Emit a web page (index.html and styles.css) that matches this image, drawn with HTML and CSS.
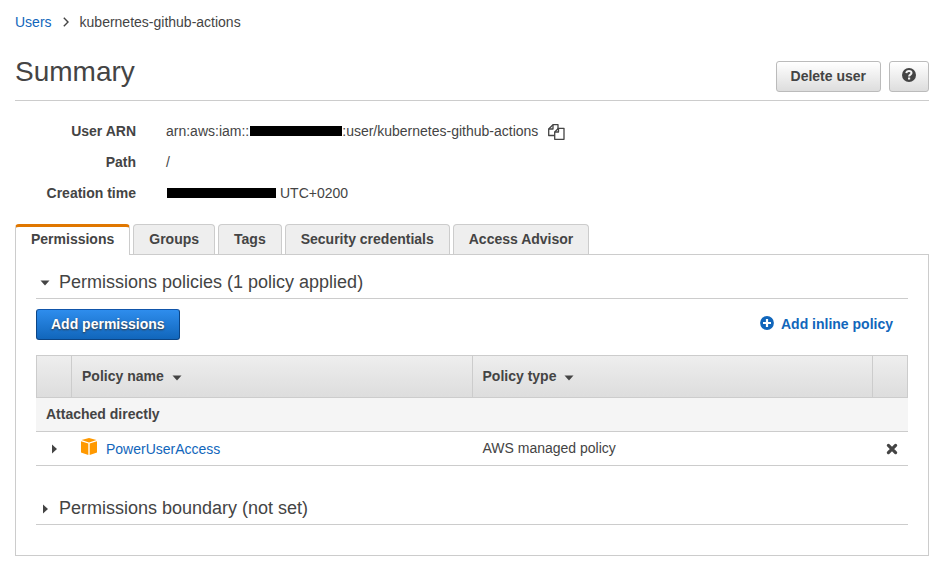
FILE: index.html
```html
<!DOCTYPE html>
<html lang="en">
<head>
<meta charset="utf-8">
<meta name="viewport" content="width=device-width, initial-scale=1">
<title>kubernetes-github-actions</title>
<link rel="stylesheet" href="styles.css">
</head>
<body>
<nav class="breadcrumb" aria-label="Breadcrumb">
  <a href="#users">Users</a>
  <svg width="6" height="10" viewBox="0 0 6 10" aria-hidden="true"><path d="M.8.800l4.200 4.200-4.200 4.200" fill="none" stroke="#444" stroke-width="1.400"/></svg>
  <span>kubernetes-github-actions</span>
</nav>

<header class="page-header">
  <h1>Summary</h1>
  <div class="actions">
    <button type="button" class="btn">Delete user</button>
    <button type="button" class="btn btn-icon" aria-label="Help">
      <svg width="14" height="14" viewBox="0 0 14 14" aria-hidden="true"><circle cx="7" cy="7" r="7" fill="#444"/><path d="M4.300 5.200C4.500 3.700 5.500 3 7 3c1.500 0 2.500.8 2.500 2C9.500 6.600 7.100 6.600 7.100 8.500" fill="none" stroke="#f4f4f4" stroke-width="2"/><path d="M6 9.500h2.200v2H6z" fill="#f4f4f4"/></svg>
    </button>
  </div>
</header>

<dl class="details">
  <dt>User ARN</dt>
  <dd>
    <span>arn:aws:iam::</span><span class="redacted redacted-account"></span><span>:user/kubernetes-github-actions</span>
    <button type="button" class="icon-button copy" aria-label="Copy">
      <svg width="17" height="16" viewBox="0 0 17 16" aria-hidden="true"><g fill="#fff" stroke="#444" stroke-width="1.300" stroke-linejoin="round"><path d="M5 .7h5v10.800H.7V5z"/><path d="M5 .7V5H.7" fill="none"/><path d="M10.500 4.300H16V15.300H6.700V8z"/><path d="M10.500 4.300V8H6.700" fill="none"/></g></svg>
    </button>
  </dd>
  <dt>Path</dt>
  <dd>/</dd>
  <dt>Creation time</dt>
  <dd><span class="redacted redacted-date"></span><span class="zone">UTC+0200</span></dd>
</dl>

<div class="tabs" role="tablist">
  <button type="button" role="tab" class="tab tab-active" aria-selected="true">Permissions</button>
  <button type="button" role="tab" class="tab" aria-selected="false">Groups</button>
  <button type="button" role="tab" class="tab" aria-selected="false">Tags</button>
  <button type="button" role="tab" class="tab" aria-selected="false">Security credentials</button>
  <button type="button" role="tab" class="tab" aria-selected="false">Access Advisor</button>
</div>

<main class="panel" role="tabpanel">
  <h2 class="section-title"><span class="marker"><svg width="10" height="6" viewBox="0 0 10 6" aria-hidden="true"><path d="M.5.500h9L5 5.500z" fill="#444"/></svg></span>Permissions policies (1 policy applied)</h2>

  <div class="toolbar">
    <button type="button" class="btn btn-primary">Add permissions</button>
    <a class="inline-policy" href="#inline-policy">
      <svg width="14" height="14" viewBox="0 0 14 14" aria-hidden="true"><circle cx="7" cy="7" r="6.900" fill="#1166bb"/><path d="M3 7h8M7 3v8" stroke="#fff" stroke-width="2.200"/></svg>
      Add inline policy
    </a>
  </div>

  <table class="policies">
    <colgroup><col class="col-expand"><col><col><col class="col-remove"></colgroup>
    <thead>
      <tr>
        <th></th>
        <th scope="col">Policy name <svg class="sort" width="10" height="6" viewBox="0 0 10 6" aria-hidden="true"><path d="M.5.500h9L5 5.500z" fill="#444"/></svg></th>
        <th scope="col">Policy type <svg class="sort" width="10" height="6" viewBox="0 0 10 6" aria-hidden="true"><path d="M.5.500h9L5 5.500z" fill="#444"/></svg></th>
        <th></th>
      </tr>
    </thead>
    <tbody>
      <tr class="group"><th colspan="4" scope="rowgroup">Attached directly</th></tr>
      <tr>
        <td class="expand"><button type="button" class="icon-button" aria-label="Expand"><svg width="5" height="10" viewBox="0 0 5 10" aria-hidden="true"><path d="M0 .5v9L5 5z" fill="#444"/></svg></button></td>
        <td>
          <div class="policy">
            <svg width="16" height="18" viewBox="1 0 16 18" aria-hidden="true"><g fill="#f90"><path d="M9 0l7.500 2.100L9 4.500 1.500 2.100z"/><path d="M1 3.300l7.300 2.300V17L1 14.600z"/><path d="M17 3.300L9.700 5.600V17l7.300-2.400z"/></g></svg>
            <a href="#policy">PowerUserAccess</a>
          </div>
        </td>
        <td class="type">AWS managed policy</td>
        <td class="remove"><button type="button" class="icon-button" aria-label="Detach policy"><svg width="12" height="12" viewBox="0 0 12 12" aria-hidden="true"><path d="M2.400 2.400l7.200 7.200M9.600 2.400L2.400 9.600" stroke="#444" stroke-width="3.200" stroke-linecap="round"/></svg></button></td>
      </tr>
    </tbody>
  </table>

  <h2 class="section-title"><span class="marker"><svg width="5" height="10" viewBox="0 0 5 10" aria-hidden="true"><path d="M0 .5v9L5 5z" fill="#444"/></svg></span>Permissions boundary (not set)</h2>
</main>
</body>
</html>
```
FILE: styles.css
```css
* {
  box-sizing: border-box;
}

body {
  margin: 0;
  padding: 12px 16px 16px 15px;
  background: #fff;
  color: #444;
  font: 14px/20px "Liberation Sans", Arial, sans-serif;
}

a {
  color: #1166bb;
  text-decoration: none;
}

button {
  font: inherit;
  color: inherit;
  cursor: pointer;
}

svg {
  display: block;
  flex: none;
}

h1,
h2 {
  margin: 0;
  font-weight: normal;
}

.breadcrumb {
  display: flex;
  align-items: center;
  gap: 11px;
}

.page-header {
  display: flex;
  justify-content: space-between;
  align-items: flex-end;
  margin-top: 24px;
  padding-bottom: 8px;
  border-bottom: 1px solid #ccc;
}

h1 {
  font-size: 28px;
  line-height: 32px;
  padding-bottom: 4px;
}

.actions {
  display: flex;
  gap: 8px;
}

.btn {
  height: 31px;
  padding: 0 14px 2px;
  border: 1px solid #bbb;
  border-radius: 3px;
  background: linear-gradient(#fff, #ddd);
  font-weight: bold;
}

.btn-icon {
  display: flex;
  align-items: center;
  padding: 0 12px 3px;
}

.btn-primary {
  border-color: #1155aa #0b4586 #0b4586;
  background: linear-gradient(#2e8ded, #1166bb);
  color: #fff;
  text-shadow: 0 1px 2px #333;
}

.details {
  display: grid;
  grid-template-columns: 121px 1fr;
  gap: 11px 30px;
  margin: 20px 0 21px;
}

.details dt {
  font-weight: bold;
  text-align: right;
}

.details dd {
  display: flex;
  align-items: center;
  margin: 0;
}

.redacted {
  height: 10px;
  background: #000;
}

.redacted-account {
  width: 92px;
  margin-left: 1px;
}

.redacted-date {
  width: 109px;
  margin-left: 1px;
}

.zone {
  margin-left: 4px;
}

.icon-button {
  padding: 0;
  border: 0;
  background: none;
}

.copy {
  margin-left: 10px;
  padding-top: 2px;
}

.tabs {
  display: flex;
  gap: 3px;
}

.tab {
  height: 30px;
  padding: 0 15px 2px;
  border: 1px solid #ccc;
  border-bottom: 0;
  border-radius: 4px 4px 0 0;
  background: #eee;
  font-weight: bold;
}

.tab-active {
  height: 31px;
  margin-bottom: -1px;
  padding-bottom: 5px;
  border-top: 3px solid #e07700;
  background: #fff;
  z-index: 1;
}

.panel {
  padding: 15px 20px 30px;
  border: 1px solid #ccc;
}

.section-title {
  display: flex;
  align-items: center;
  padding-bottom: 4px;
  border-bottom: 1px solid #ccc;
  font-size: 18px;
  line-height: 24px;
}

.marker {
  display: flex;
  justify-content: center;
  width: 18px;
  margin-right: 5px;
  padding-top: 2px;
}

.toolbar {
  display: flex;
  justify-content: space-between;
  align-items: center;
  margin: 10px 0 15px;
  padding-right: 15px;
}

.inline-policy {
  display: flex;
  align-items: center;
  gap: 7px;
  padding-bottom: 2px;
  font-weight: bold;
}

.inline-policy svg {
  margin-bottom: 2px;
}

.policies {
  width: 100%;
  margin-bottom: 30px;
  table-layout: fixed;
  border-collapse: separate;
  border-spacing: 0;
}

.col-expand {
  width: 35px;
}

.col-remove {
  width: 36px;
}

.policies th,
.policies td {
  height: 34px;
  padding: 0 10px;
  border-bottom: 1px solid #ccc;
  text-align: left;
}

.policies th,
.policies .type {
  padding-bottom: 2px;
}

.policies thead th {
  height: 43px;
  border-top: 1px solid #ccc;
  border-left: 1px solid #ccc;
  background: linear-gradient(#eee, #ddd);
}

.policies thead th:last-child {
  border-right: 1px solid #ccc;
}

.policies .group th {
  background: #f5f5f5;
}

.sort {
  display: inline-block;
  margin-left: 4px;
}

.policies .type {
  padding-left: 11px;
}

.policies .expand {
  padding: 0 0 0 16px;
}

.policies .remove {
  padding: 0 10px 0 0;
}

.remove .icon-button {
  margin-left: auto;
}

.policies .icon-button {
  display: block;
}

.policy {
  display: flex;
  align-items: center;
  gap: 9px;
}

.policy svg {
  margin-bottom: 4px;
}
```
